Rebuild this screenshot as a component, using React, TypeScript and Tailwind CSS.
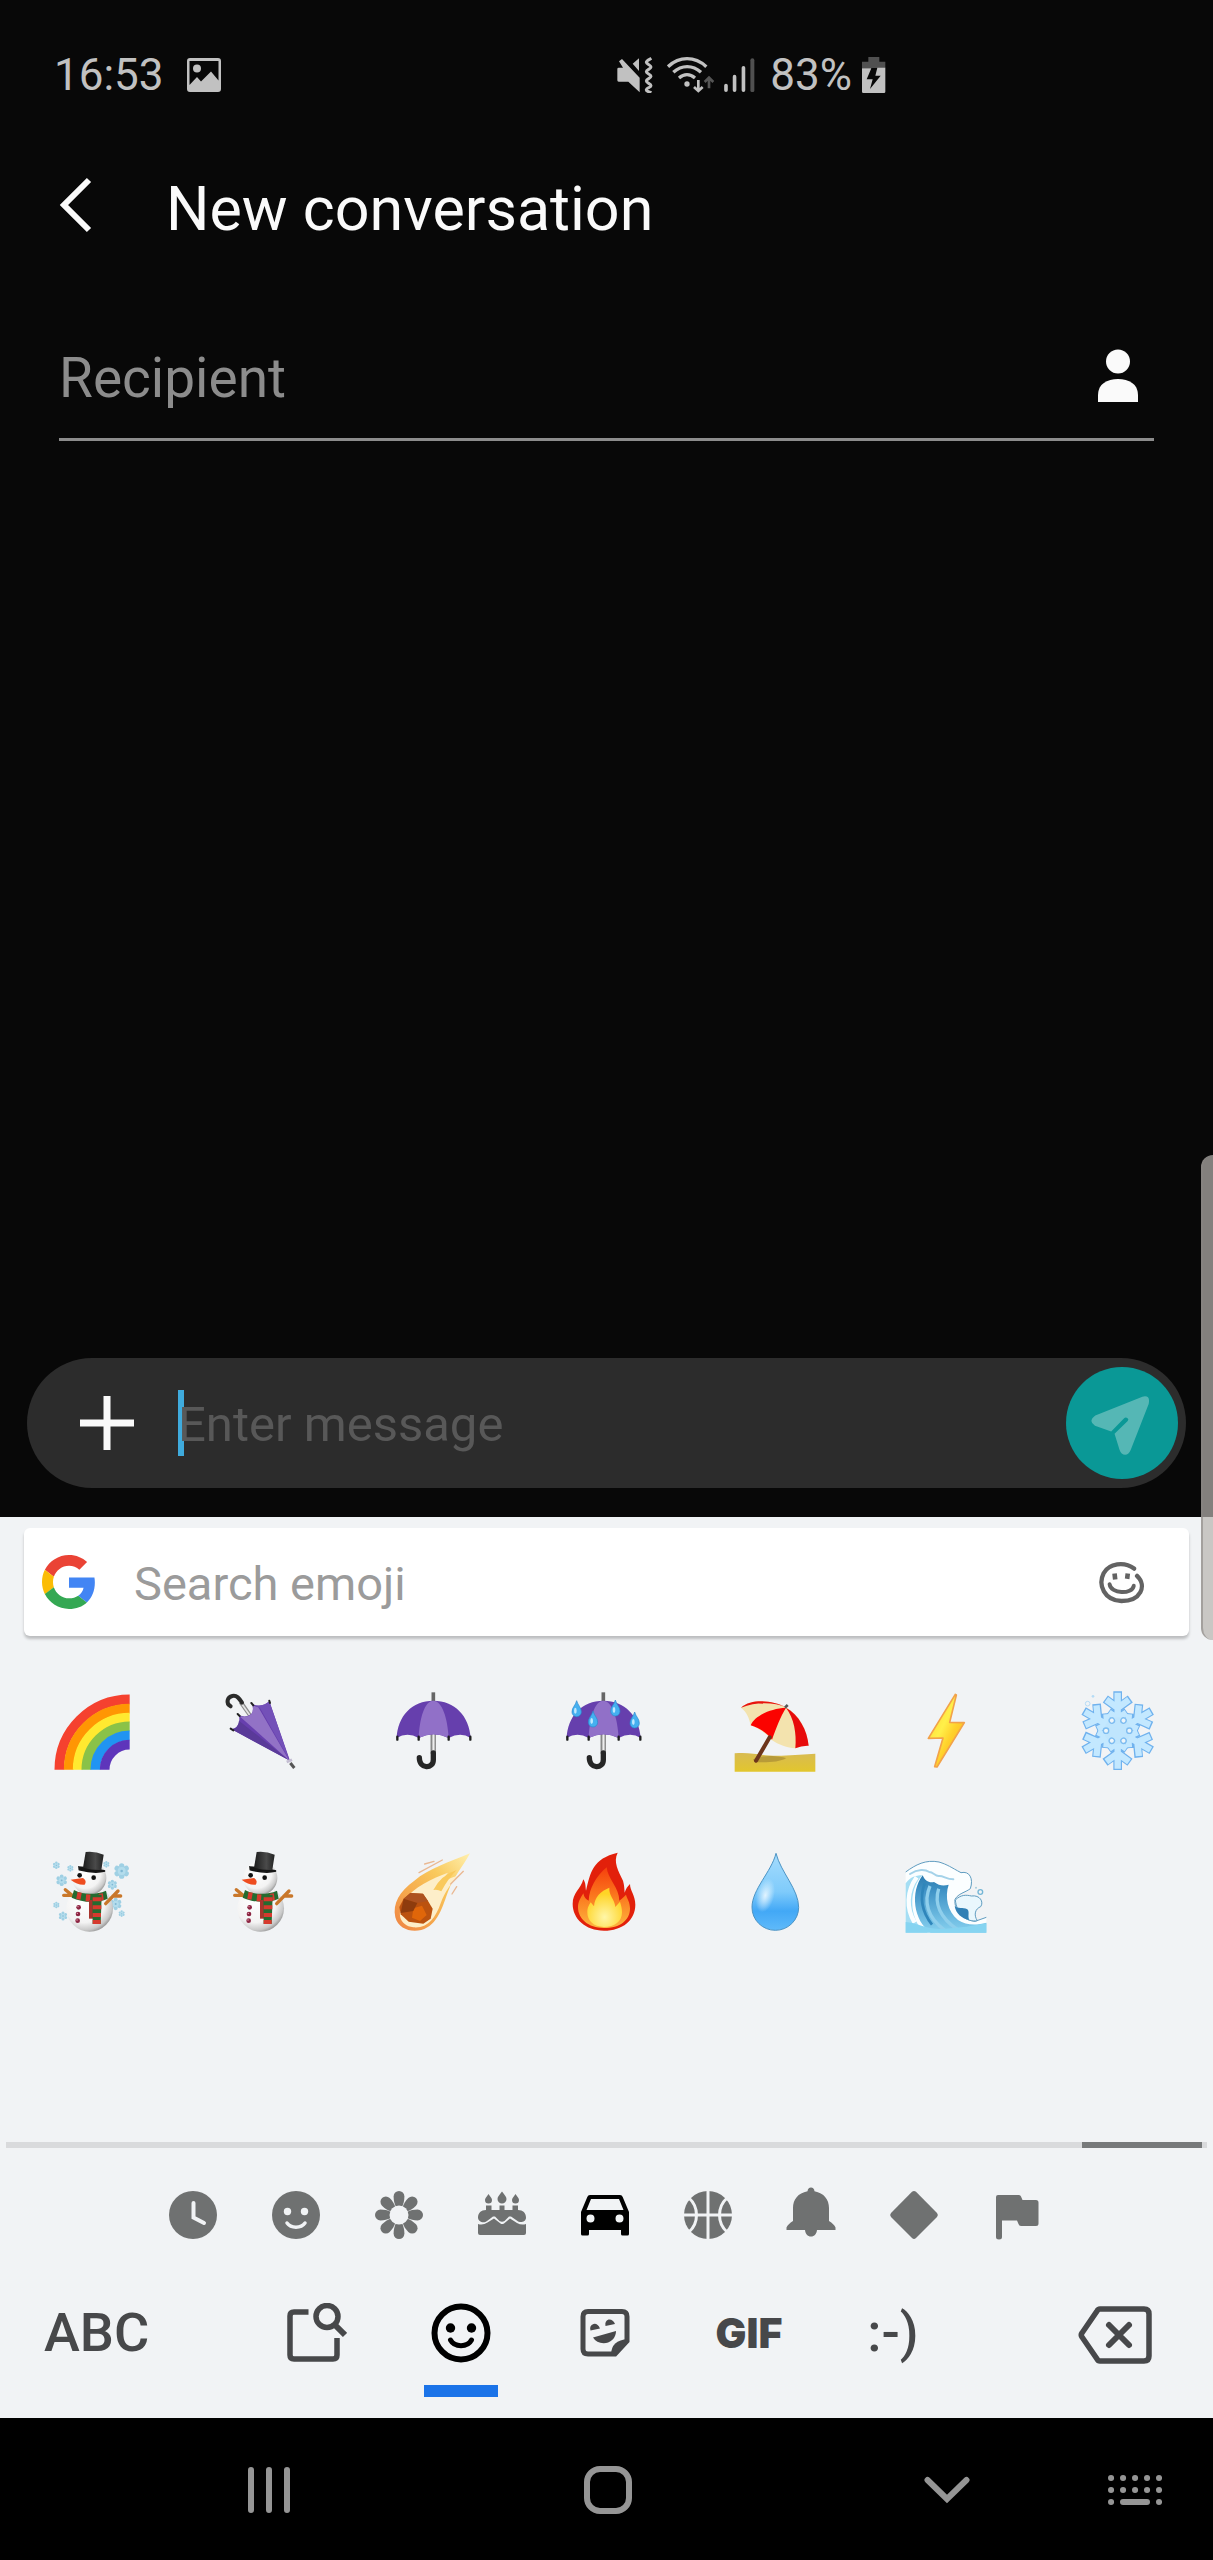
import { useState } from "react";
import type { ReactNode } from "react";

type IconProps = { box: string; className: string; children: ReactNode };

function Icon({ box, className, children }: IconProps) {
	return (
		<svg viewBox={box} className={className} fill="none" aria-hidden="true">
			{children}
		</svg>
	);
}

/* ---------- status bar ---------- */

function StatusBar() {
	return (
		<header className="flex h-[150px] items-center pl-[54px] pr-[327px] text-[44px] leading-none text-[#c1c1c1]">
			<time>16:53</time>
			<Icon box="0 0 34 34" className="ml-[23px] h-[34px] w-[34px]">
				<path
					fillRule="evenodd"
					fill="currentColor"
					d="M3 0H31a3 3 0 0 1 3 3V31a3 3 0 0 1-3 3H3a3 3 0 0 1-3-3V3a3 3 0 0 1 3-3zM2.500 3V27L10 19l4 4.500L24 13.500l7.500 9V3z"
				/>
				<circle cx="10" cy="10.500" r="4" fill="currentColor" />
			</Icon>
			<Icon box="50 44 108 108" className="ml-auto h-9 w-9">
				<path
					fill="currentColor"
					d="M51 80q0-4 4-4h13L56 57l9-7 53 56v44L84 118H55q-4 0-4-4zM97 64l19-16v38z"
				/>
				<path
					stroke="currentColor"
					strokeWidth="9"
					d="M153 48c-6 4-15 7-15 12s14 8 14 14-14 8-14 14 14 8 14 14-14 8-14 14 14 8 14 14-13 6-14 12 9 6 15 9"
				/>
			</Icon>
			<Icon box="200 44 144 108" className="ml-[14px] h-9 w-12">
				<g stroke="currentColor" strokeWidth="10">
					<path d="M203 73c34-32 80-32 115 0M219 90c25-23 58-23 83 0M236 107c15-13 33-13 48 0" />
					<path d="M294 113v32M281 134l13 12 13-12" strokeWidth="8" />
				</g>
				<circle cx="260" cy="125" r="8" fill="currentColor" />
				<path d="M326 138v-32M313 119l13-13 13 13" stroke="#555" strokeWidth="8" />
			</Icon>
			<Icon box="370 50 94 102" className="ml-[9px] h-[34px] w-[31px]">
				<path
					d="M376 133v14M402 106v41M429 79v68"
					stroke="currentColor"
					strokeWidth="11"
					strokeLinecap="round"
				/>
				<path d="M456 56v91" stroke="#505050" strokeWidth="12" strokeLinecap="round" />
			</Icon>
			<span className="ml-[15px]">83%</span>
			<Icon box="788 44 72 108" className="ml-[10px] h-9 w-6">
				<path d="M807 44h33v14h18v19h-70V58h19z" fill="#505050" />
				<path
					fillRule="evenodd"
					fill="currentColor"
					d="M788 78h28l-14 33h18l-8 29 32-40h-16l6-24h24v72q0 4-4 4h-62q-4 0-4-4z"
				/>
			</Icon>
		</header>
	);
}

/* ---------- emoji ---------- */

const RAINBOW = [
	{ r: 211, color: "#f5412f" },
	{ r: 183, color: "#ff9603" },
	{ r: 156, color: "#ffe930" },
	{ r: 130, color: "#8ac248" },
	{ r: 103, color: "#2094f2" },
	{ r: 75, color: "#5e35bb" },
];

function Rainbow() {
	return (
		<Icon box="151 87 252 252" className="h-[84px] w-[84px]">
			{RAINBOW.map(({ r, color }) => (
				<path
					key={color}
					d={`M${390 - r} 329A${r} ${r} 0 0 1 390 ${329 - r}`}
					stroke={color}
					strokeWidth="29"
				/>
			))}
		</Icon>
	);
}

function ClosedUmbrella() {
	return (
		<Icon box="663 87 252 252" className="h-[84px] w-[84px]">
			<path d="M722 126l28 40" stroke="#8a8a8a" strokeWidth="12" />
			<path d="M724 130l25 35" stroke="#e4e4e4" strokeWidth="5" />
			<path
				d="M692 139c-16-9-10-28 5-31 14-3 21 8 29 20"
				stroke="#2b2b2b"
				strokeWidth="12"
				strokeLinecap="round"
			/>
			<path
				d="M695 208q28-5 22-42 23 8 37-4 8-10 3-30 28 12 51-8l62 178z"
				fill="#673fae"
			/>
			<path d="M717 167q23 8 37-4 8-10 3-27l18 6 93 160z" fill="#9272c6" />
			<path d="M757 133q28 11 51-9l60 176-88-156z" fill="#7350b8" />
			<path d="M695 208q20-4 22-26l150 119z" fill="#5a3a99" />
			<path
				d="M692 206l8 5M713 162l6 6M754 129l6 7M808 122l2 7"
				stroke="#222"
				strokeWidth="6"
				strokeLinecap="round"
			/>
			<path d="M860 306l16-7" stroke="#c4bdd2" strokeWidth="8" />
			<path d="M871 309l12 15" stroke="#555" strokeWidth="9" />
		</Icon>
	);
}

function Umbrella({ rain = false }: { rain?: boolean }) {
	return (
		<Icon box="1176 87 252 252" className="h-[84px] w-[84px]">
			<defs>
				<linearGradient id="shaft" x1="0" y1="0" x2="1" y2="0">
					<stop offset="0" stopColor="#555" />
					<stop offset=".5" stopColor="#f4f4f4" />
					<stop offset="1" stopColor="#777" />
				</linearGradient>
			</defs>
			<path d="M1300 97v30" stroke="#666" strokeWidth="11" />
			<path d="M1292 215h16v66h-16z" fill="url(#shaft)" />
			<path
				d="M1300 279v20c0 29-42 29-42-6"
				stroke="#262626"
				strokeWidth="16"
				strokeLinecap="round"
			/>
			<path
				d="M1190 234c3-66 46-112 110-112s108 46 112 112q-30-20-66 0-45-22-90 0-34-20-66 0z"
				fill="#663fad"
			/>
			<path d="M1256 234c3-60 18-112 44-112s43 52 46 112q-45-22-90 0z" fill="#9170c8" />
			<path
				d="M1192 230v9M1256 230v9M1346 230v9M1411 230v9"
				stroke="#1e1e1e"
				strokeWidth="7"
				strokeLinecap="round"
			/>
			{rain && (
				<g fill="#45b0f0" stroke="#2b86cd" strokeWidth="2">
					{[
						[1220, 148],
						[1336, 146],
						[1269, 179],
						[1394, 182],
					].map(([x, y]) => (
						<g key={x} transform={`translate(${x} ${y})`}>
							<path d="M0-26c4 15 14 20 14 34a14 14 0 0 1-28 0c0-14 10-19 14-34z" />
							<ellipse cx="-4" cy="4" rx="4" ry="9" fill="#bfe8ff" stroke="none" />
						</g>
					))}
				</g>
			)}
		</Icon>
	);
}

function BeachUmbrella() {
	return (
		<Icon box="100 57 252 252" className="h-[84px] w-[84px]">
			<defs>
				<linearGradient id="sand" x1="0" y1="0" x2="0" y2="1">
					<stop offset="0" stopColor="#d8bb52" />
					<stop offset="1" stopColor="#e2c62d" />
				</linearGradient>
			</defs>
			<path d="M105 250c50-6 90 10 140 7 40-2 70-4 102-6v54H105z" fill="url(#sand)" />
			<path d="M160 268c30-16 80-10 100-4-20 14-70 14-95 12z" fill="#a88c33" opacity=".7" />
			<path
				d="M124 113c32-28 95-22 134-1 42 23 64 68 69 115-14-1-26 3-40 8-24-3-50-10-72-26-12-18-36-32-62-43-4-22-12-40-29-53z"
				fill="#f3e3ae"
			/>
			<path d="M124 113c32-28 95-22 134-1-32-14-84-18-134 1z" fill="#e81410" />
			<path d="M153 166c10-26 54-50 106-53-16 26-30 62-42 96-14-20-38-35-64-43z" fill="#fb0300" />
			<path d="M259 113c39 21 64 68 68 114q-21-1-40 8c4-46-4-90-28-122z" fill="#e70b0b" />
			<path d="M256 113l8-8" stroke="#555" strokeWidth="8" />
			<path d="M210 202l-41 70" stroke="#6d351b" strokeWidth="12" strokeLinecap="round" />
		</Icon>
	);
}

function Bolt() {
	return (
		<Icon box="612 57 252 252" className="h-[84px] w-[84px]">
			<defs>
				<linearGradient id="bolt" x1="0" y1="0" x2="1" y2="1">
					<stop offset="0" stopColor="#ffc928" />
					<stop offset=".42" stopColor="#fff04a" />
					<stop offset=".6" stopColor="#ffd12b" />
					<stop offset="1" stopColor="#f9a51a" />
				</linearGradient>
			</defs>
			<path
				d="M766 73L685 205l44-1-25 86 7 1 82-133-44-1 20-82z"
				fill="url(#bolt)"
				stroke="#f2a24a"
				strokeWidth="5"
				strokeLinejoin="round"
			/>
		</Icon>
	);
}

const TURNS = [0, 60, 120, 180, 240, 300];

function Snowflake() {
	return (
		<Icon box="1124 57 252 252" className="h-[84px] w-[84px]">
			{[
				{ color: "#70b2ee", width: 26 },
				{ color: "#c3e8ff", width: 19 },
			].map(({ color, width }) => (
				<g key={color} stroke={color} strokeWidth={width} strokeLinejoin="round">
					{TURNS.map((a) => (
						<path
							key={a}
							transform={`rotate(${a} 1252 182)`}
							d={
								width === 26
									? "M1252 182V64M1215 87l37 27 38-27M1224 126l28 20 28-20"
									: "M1252 182V68M1218 89l34 25 34-25M1226 128l26 18 26-18"
							}
						/>
					))}
					<circle cx="1252" cy="182" r="34" />
				</g>
			))}
			<circle cx="1252" cy="182" r="40" fill="#bfe5fd" />
			{TURNS.map((a) => (
				<circle
					key={a}
					cx="1287"
					cy="182"
					r="8"
					transform={`rotate(${a} 1252 182)`}
					fill="#eef5fa"
					stroke="#7dbcf0"
					strokeWidth="4"
				/>
			))}
			<circle cx="1162" cy="101" r="7" stroke="#b6dcf6" strokeWidth="3" />
			<circle cx="1178" cy="79" r="4" fill="#b6dcf6" />
		</Icon>
	);
}

const FLAKES = [
	{ x: 170, y: 616, r: 9 },
	{ x: 212, y: 625, r: 8 },
	{ x: 186, y: 661, r: 14 },
	{ x: 320, y: 613, r: 8 },
	{ x: 366, y: 633, r: 19 },
	{ x: 338, y: 674, r: 12 },
	{ x: 348, y: 732, r: 15 },
	{ x: 170, y: 735, r: 8 },
	{ x: 190, y: 768, r: 11 },
	{ x: 366, y: 761, r: 8 },
];

function Snowman({ snow = false }: { snow?: boolean }) {
	return (
		<Icon box="151 570 252 252" className="h-[84px] w-[84px]">
			<defs>
				<radialGradient id="snowball" cx=".38" cy=".35" r=".7">
					<stop offset="0" stopColor="#fff" />
					<stop offset=".65" stopColor="#f3f3f3" />
					<stop offset=".88" stopColor="#c9c9c9" />
					<stop offset="1" stopColor="#909090" />
				</radialGradient>
				<linearGradient id="hat" x1="0" y1="0" x2="1" y2="0">
					<stop offset="0" stopColor="#1c1c1c" />
					<stop offset=".6" stopColor="#4a4a4a" />
					<stop offset="1" stopColor="#222" />
				</linearGradient>
			</defs>
			{snow &&
				FLAKES.map(({ x, y, r }) => (
					<g key={`${x}-${y}`} transform={`translate(${x} ${y})`} fill="#9fd0e4">
						{TURNS.map((a) => (
							<circle key={a} cx={r * 0.82} cy="0" r={r * 0.42} transform={`rotate(${a + 30})`} />
						))}
						<circle r={r * 0.62} fill="#b3dcec" />
						<circle r={r * 0.2} fill="#7fb8d4" />
					</g>
				))}
			<circle cx="270" cy="745" r="70" fill="url(#snowball)" />
			<circle cx="269" cy="654" r="51" fill="url(#snowball)" />
			<g stroke="#c9772a" strokeWidth="10" strokeLinecap="round">
				<path d="M197 689l24 20M192 706h22" />
				<path d="M318 731l37-38M340 708h23" />
			</g>
			<path d="M238 621c24 2 54 6 78 12-24 6-54 2-77-4z" fill="#161616" stroke="#161616" strokeWidth="5" />
			<path d="M258 576q28-3 54 8l-7 46q-28 1-55-7z" fill="url(#hat)" />
			<circle cx="240" cy="646" r="7" fill="#121212" />
			<circle cx="282" cy="653" r="7" fill="#121212" />
			<path d="M213 659l37-5q13 8 5 20-21 2-42-15z" fill="#ee4d20" />
			<path d="M223 690c28 15 66 15 96 2l5 24c-32 14-76 12-108-3z" fill="#246b30" />
			<path
				d="M240 697l-4 21M266 703l-2 21M303 701l3 20"
				stroke="#d63a2e"
				strokeWidth="13"
			/>
			<path d="M268 720h12v56h-12z" fill="#a7342c" />
			<path d="M278 704h28l-3 88h-24z" fill="#246b30" />
			<path d="M279 718h27M279 742h26M279 765h25M279 786h24" stroke="#d63a2e" strokeWidth="12" />
			<g fill="#8c2441">
				<circle cx="237" cy="742" r="7" />
				<circle cx="235" cy="762" r="7" />
				<circle cx="234" cy="782" r="7" />
			</g>
			<g fill="#e8a9bb">
				<circle cx="235" cy="740" r="2" />
				<circle cx="233" cy="760" r="2" />
				<circle cx="232" cy="780" r="2" />
			</g>
		</Icon>
	);
}

function Comet() {
	return (
		<Icon box="1176 570 252 252" className="h-[84px] w-[84px]">
			<defs>
				<linearGradient id="tail" x1="1" y1="0" x2="0" y2="1">
					<stop offset="0" stopColor="#fff0b0" />
					<stop offset=".35" stopColor="#f9c95c" />
					<stop offset=".7" stopColor="#f5a64c" />
					<stop offset="1" stopColor="#ee8142" />
				</linearGradient>
			</defs>
			<path
				d="M1410 580c-62 26-124 46-167 82-44 32-66 68-57 110 9 34 45 46 78 38 50-14 64-72 82-120 14-36 42-70 64-110z"
				fill="url(#tail)"
			/>
			<path
				d="M1344 638c-46 16-104 44-130 82-26 40-16 76 26 82 42 4 66-26 82-72 12-32 30-62 56-82-24 0-44 16-60 32 6-16 14-28 26-42z"
				fill="#fdeec9"
			/>
			<path d="M1300 690q22-44 70-60-26 26-46 64-10-6-24-4z" fill="#f9c95c" />
			<path d="M1211 716l20-17 38 2 15 22 14 23-6 30-22 15-44-6-24-22-4-22z" fill="#bb520f" />
			<path d="M1231 699l38 2 15 22-32 6-41-13z" fill="#ad5220" />
			<path d="M1240 745l26-8 14 28-20 18-24-10z" fill="#e0660a" />
			<path d="M1211 716l41 13-12 24-38 6z" fill="#8e3c0d" />
			<path
				d="M1257 638l70-38M1274 612l28-8M1356 702l14-22M1352 672l38-38"
				stroke="#eab892"
				strokeWidth="4"
				strokeLinecap="round"
			/>
		</Icon>
	);
}

function Fire() {
	return (
		<Icon box="-126 570 252 252" className="h-[84px] w-[84px]">
			<defs>
				<linearGradient id="flame" x1="0" y1="0" x2="0" y2="1">
					<stop offset="0" stopColor="#f5400d" />
					<stop offset=".5" stopColor="#fb7b1f" />
					<stop offset="1" stopColor="#fdb640" />
				</linearGradient>
				<radialGradient id="core" cx=".5" cy=".75" r=".6">
					<stop offset="0" stopColor="#fff6a8" />
					<stop offset="1" stopColor="#ffd426" />
				</radialGradient>
			</defs>
			<path
				d="M41 578c-14 28 2 54 16 84 4 14 4 24 5 36 4-12 8-18 16-26 0 20 16 34 16 62 0 46-38 78-94 78s-94-36-94-80c0-34 24-44 32-74 8 12 6 22 8 34 14-56 20-96 95-114z"
				fill="#e2200b"
			/>
			<path
				d="M8 622c2 32 38 62 38 100 8-6 14-12 20-18 4 14 12 22 12 42 0 34-30 58-78 58s-78-28-78-62c0-18 8-28 16-42 2 12 8 18 16 22 2-38 22-72 54-100z"
				fill="url(#flame)"
			/>
			<path
				d="M16 683c-2 24 16 34 18 58l14-16c4 14 6 20 6 32 0 28-22 44-54 44s-50-20-50-44c0-14 4-20 10-30l10 12c2-28 20-46 46-56z"
				fill="url(#core)"
			/>
		</Icon>
	);
}

function Droplet() {
	return (
		<Icon box="100 540 252 252" className="h-[84px] w-[84px]">
			<defs>
				<linearGradient id="water" x1="0" y1="0" x2="0" y2="1">
					<stop offset="0" stopColor="#a5dcfd" />
					<stop offset=".5" stopColor="#7fcbfb" />
					<stop offset=".75" stopColor="#42a8f6" />
					<stop offset="1" stopColor="#5fbafa" />
				</linearGradient>
				<radialGradient id="shine">
					<stop offset="0" stopColor="#e2f4ff" />
					<stop offset="1" stopColor="#e2f4ff" stopOpacity="0" />
				</radialGradient>
			</defs>
			<path
				d="M229 550c14 56 68 108 68 162a70 69 0 0 1-140 0c0-54 58-106 72-162z"
				fill="url(#water)"
				stroke="#4b93c4"
				strokeWidth="3"
			/>
			<ellipse cx="197" cy="676" rx="27" ry="52" fill="url(#shine)" transform="rotate(14 197 676)" />
		</Icon>
	);
}

function Wave() {
	return (
		<Icon box="612 540 252 252" className="h-[84px] w-[84px]">
			<defs>
				<linearGradient id="sea" x1="0" y1="0" x2="0" y2="1">
					<stop offset="0" stopColor="#2b7cb0" />
					<stop offset=".3" stopColor="#4295c8" />
					<stop offset=".65" stopColor="#65b4dc" />
					<stop offset="1" stopColor="#86d0ef" />
				</linearGradient>
			</defs>
			<path
				d="M617 606c30-22 60-38 100-30 26 8 36 16 66 32 26-6 38 18 28 48-16 12-36 14-46 32-4 34 26 62 60 66l34-12v46H617z"
				fill="#fbfeff"
			/>
			<path
				d="M617 606c30-22 60-38 100-30 26 8 36 16 66 32 26-6 38 18 28 48-16 12-36 14-46 32-4 34 26 62 60 66l34-12"
				stroke="#5f9cc0"
				strokeWidth="3"
			/>
			<path
				d="M766 690c16-16 32-16 48-12 26-4 38 18 28 32-16 6-22 24-10 42-34 6-62-22-66-62z"
				fill="#e9f7fd"
				stroke="#5f9cc0"
				strokeWidth="3"
			/>
			<path d="M764 709c10 8 24 2 38 9 8 8 0 20 6 32-24-4-40-20-44-41z" fill="#3180b5" />
			<path d="M617 640c14-18 28-24 50-24-34 36-40 96-14 146l30 26h-66z" fill="#a5def4" />
			<path d="M650 622c-30 42-32 92-6 136" stroke="#fbfeff" strokeWidth="13" />
			<path
				d="M668 616c6 16 20 24 34 20 16 12 30 12 44 8-12 36-4 80 28 106 24 16 56 16 85 8v30H692c-52-36-62-122-24-172z"
				fill="url(#sea)"
			/>
			<path d="M690 648c-20 46-8 96 44 132M716 656c-14 44 4 88 56 122" stroke="#8fcfec" strokeWidth="10" />
			<path d="M674 640c-16 44-6 88 22 124" stroke="#2f86bb" strokeWidth="8" />
			<path
				d="M630 612c24-16 46-14 58-6 12 0 16 12 28 12 14-2 22 10 44 10"
				stroke="#a4d2e9"
				strokeWidth="6"
				strokeLinecap="round"
			/>
			<path d="M617 756c34 2 70 26 120 20 44-2 80-8 122-16v28H617z" fill="#86d4f1" />
			<circle cx="841" cy="666" r="7" stroke="#74b6d6" strokeWidth="4" />
			<circle cx="828" cy="653" r="3" fill="#a9cede" />
		</Icon>
	);
}

const EMOJI = [
	{ name: "rainbow", art: <Rainbow /> },
	{ name: "closed umbrella", art: <ClosedUmbrella /> },
	{ name: "umbrella", art: <Umbrella /> },
	{ name: "umbrella with rain drops", art: <Umbrella rain /> },
	{ name: "umbrella on ground", art: <BeachUmbrella /> },
	{ name: "high voltage", art: <Bolt /> },
	{ name: "snowflake", art: <Snowflake /> },
	{ name: "snowman", art: <Snowman snow /> },
	{ name: "snowman without snow", art: <Snowman /> },
	{ name: "comet", art: <Comet /> },
	{ name: "fire", art: <Fire /> },
	{ name: "droplet", art: <Droplet /> },
	{ name: "water wave", art: <Wave /> },
];

/* ---------- emoji categories ---------- */

const PAPER = "#f1f3f5";

const CATEGORIES = [
	{
		name: "Recent",
		art: (
			<>
				<circle cx="24" cy="24" r="24" fill="currentColor" />
				<path d="M24.500 12v14.500L35 32" stroke={PAPER} strokeWidth="4" strokeLinecap="round" />
			</>
		),
	},
	{
		name: "Smileys",
		art: (
			<>
				<circle cx="24" cy="24" r="24" fill="currentColor" />
				<circle cx="15.500" cy="20.500" r="3.700" fill={PAPER} />
				<circle cx="32.500" cy="20.500" r="3.700" fill={PAPER} />
				<path d="M15 32c4 5.500 14 5.500 18 0" stroke={PAPER} strokeWidth="3.500" strokeLinecap="round" />
			</>
		),
	},
	{
		name: "Nature",
		art: (
			<>
				{[0, 45, 90, 135, 180, 225, 270, 315].map((a) => (
					<path
						key={a}
						transform={`rotate(${a} 24 24)`}
						d="M24 0a5.400 5.400 0 0 1 5.400 5.400c0 4-.8 7-2.400 10.600h-6c-1.600-3.600-2.400-6.600-2.400-10.600A5.400 5.400 0 0 1 24 0z"
						fill="currentColor"
					/>
				))}
				<circle cx="24" cy="24" r="9.500" fill={PAPER} />
			</>
		),
	},
	{
		name: "Food",
		art: (
			<path
				fill="currentColor"
				d="M10.500 3c2 3 3.500 4 3.500 6a3.500 3.500 0 0 1-7 0c0-2 1.500-3 3.500-6zM24 .5c2.500 3.500 4.500 5 4.500 7.500a4.500 4.500 0 0 1-9 0c0-2.500 2-4 4.500-7.500zM37.500 3c2 3 3.500 4 3.500 6a3.500 3.500 0 0 1-7 0c0-2 1.500-3 3.500-6zM8 14.500h5.500V19h8v-4.500h5V19h8v-4.500H40V19c5 0 8 3 8 7.500 0 5-6.500 5.500-8.500 3.500L33 25.500h-2L26.500 30q-2.500 1.500-5 0L17 25.500h-2L9 30c-3 2.500-9 1-9-3.500C0 22 3 19 8 19zM0 33q5 1.500 9.500-1.500l6.500-4 6.500 5q1.500 1 3.500 0l6-5 7 4.500Q43.500 34.500 48 33v9a2 2 0 0 1-2 2H2a2 2 0 0 1-2-2z"
			/>
		),
	},
	{
		name: "Travel",
		art: (
			<path
				fillRule="evenodd"
				fill="currentColor"
				d="M9 4h30q2 0 2.700 2L48 21v22q0 1.500-1.500 1.500h-5Q40 44.500 40 43v-4H8v4q0 1.500-1.500 1.500h-5Q0 44.500 0 43V21L6.300 6Q7 4 9 4zM10 8L5.500 19h37L38 8zM9.500 23.500a4 4 0 1 0 0 8 4 4 0 0 0 0-8zM38.500 23.500a4 4 0 1 0 0 8 4 4 0 0 0 0-8z"
			/>
		),
	},
	{
		name: "Activities",
		art: (
			<>
				<circle cx="24" cy="24" r="24" fill="currentColor" />
				<path
					d="M24 0v48M0 24h48M5 7c10 9 10 25 0 34M43 7c-10 9-10 25 0 34"
					stroke={PAPER}
					strokeWidth="3"
				/>
			</>
		),
	},
	{
		name: "Objects",
		art: (
			<path
				fill="currentColor"
				d="M24-3.500q3 0 3.500 3.700C37 2 42 8.500 42 17v13q5 3 6.500 6.500V39H30c-.5 4-2.500 6.500-6 6.500S18.500 43 18 39H-.5v-2.500Q1 33 6 30V17C6 8.500 11 2 20.500.2q.5-3.700 3.500-3.700z"
			/>
		),
	},
	{
		name: "Symbols",
		art: (
			<path
				fill="currentColor"
				d="M22 .8q2-1.800 4 0L47 22q1.800 2 0 4L26 47q-2 1.800-4 0L1 26q-1.800-2 0-4z"
			/>
		),
	},
	{
		name: "Flags",
		art: (
			<path
				fill="currentColor"
				d="M5 4h21q1.500 0 2 1.500L29.500 9H43q2.500 0 2.500 2.500v21Q45.500 35 43 35H28q-2 0-2.500-2L24 29.500H9V46q0 2.500-3 2.500T3 46V6q0-2 2-2z"
			/>
		),
	},
];

/* ---------- keyboard modes ---------- */

const MODES = [
	{
		name: "Search",
		art: (
			<Icon box="0 0 60 60" className="h-[60px] w-[60px]">
				<path d="M21.500 9H7Q3 9 3 13V52Q3 56 7 56H46Q50 56 50 52V35" stroke="currentColor" strokeWidth="5.500" />
				<circle cx="40" cy="13.500" r="11" stroke="currentColor" strokeWidth="5.500" />
				<path d="M47 21l11 11" stroke="currentColor" strokeWidth="6" />
			</Icon>
		),
	},
	{
		name: "Emoji",
		art: (
			<Icon box="0 0 60 60" className="h-[60px] w-[60px]">
				<circle cx="30" cy="30" r="26.500" stroke="currentColor" strokeWidth="6" />
				<circle cx="19.500" cy="25" r="4.700" fill="currentColor" />
				<circle cx="40.500" cy="25" r="4.700" fill="currentColor" />
				<path d="M19.500 37c4 7.500 17 7.500 21 0" stroke="currentColor" strokeWidth="5" strokeLinecap="round" />
			</Icon>
		),
	},
	{
		name: "Stickers",
		art: (
			<Icon box="0 0 50 50" className="h-[50px] w-[50px]">
				<path d="M8 3.500H42q5 0 5 5V33L35 46H8q-5 0-5-5V8.500q0-5 5-5z" stroke="currentColor" strokeWidth="5" />
				<path d="M31 47q0-15 17-16v3L35 48z" fill="currentColor" />
				<path d="M10.500 22.500q-1.500-5 3-6.500 4-1 6.500 4.500zM25.500 18q-1-5 3-6.500 4.500-.5 6.500 4.500zM13 29.500l23-6.500c0 6-4 11-10 12q-9 1-13-5.500z" fill="currentColor" />
			</Icon>
		),
	},
	{
		name: "GIF",
		art: <span className="font-[Inter] text-[41px] font-black leading-none">GIF</span>,
	},
	{
		name: "Emoticons",
		art: <span className="text-[54px] font-medium leading-none">:-)</span>,
	},
];

function Keyboard() {
	const [category, setCategory] = useState("Travel");
	const [mode, setMode] = useState("Emoji");

	return (
		<section className="flex flex-col bg-[#f1f3f5] pb-[21px] pt-[11px]" aria-label="Keyboard">
			<label className="mx-6 flex h-[108px] items-center rounded-md bg-white pl-[18px] pr-[44px] shadow-[0_3px_3px_rgba(0,0,0,0.22)]">
				<Icon box="0 0 48 48" className="h-[54px] w-[54px] shrink-0">
					<path fill="#EA4335" d="M24 9.500c3.540 0 6.710 1.220 9.210 3.600l6.850-6.850C35.900 2.380 30.470 0 24 0 14.620 0 6.510 5.380 2.560 13.220l7.980 6.190C12.430 13.720 17.740 9.500 24 9.500z" />
					<path fill="#4285F4" d="M46.980 24.550c0-1.570-.15-3.090-.38-4.550H24v9.020h12.940c-.58 2.960-2.260 5.480-4.780 7.180l7.730 6c4.510-4.180 7.090-10.360 7.090-17.650z" />
					<path fill="#FBBC05" d="M10.530 28.590c-.48-1.450-.76-2.990-.76-4.590s.27-3.140.76-4.590l-7.980-6.190C.92 16.460 0 20.120 0 24c0 3.880.92 7.540 2.560 10.780l7.970-6.190z" />
					<path fill="#34A853" d="M24 48c6.480 0 11.930-2.130 15.890-5.810l-7.730-6c-2.150 1.450-4.920 2.300-8.160 2.300-6.260 0-11.570-4.220-13.470-9.910l-7.980 6.190C6.510 42.620 14.620 48 24 48z" />
				</Icon>
				<input
					type="text"
					aria-label="Search emoji"
					placeholder="Search emoji"
					className="ml-[38px] min-w-0 flex-1 bg-transparent pt-1 text-[47px] leading-[60px] text-gray-800 outline-none placeholder:text-[#9b9b9b]"
				/>
				<Icon box="294 1262 142 130" className="h-[43px] w-[47px] shrink-0">
					<g stroke="#636363" strokeWidth="13" strokeLinecap="round">
						<path d="M403 1285c-30-22-75-16-92 14-18 36 2 82 54 84 58 0 78-46 47-76" />
						<path d="M329 1332c4 30 68 32 73 5" strokeWidth="12" />
					</g>
					<path d="M344 1300l2 18M384 1300l-2 16" stroke="#636363" strokeWidth="14" />
				</Icon>
			</label>

			<div className="mt-[53px] grid h-[453px] auto-rows-[84px] grid-cols-7 gap-y-[77px] pl-[7px] pr-[11px]">
				{EMOJI.map(({ name, art }) => (
					<button key={name} type="button" aria-label={name} className="flex justify-center">
						{art}
					</button>
				))}
			</div>

			<div className="mx-[6px] flex h-[6px] justify-end bg-[#d9dadc] pr-[5px]">
				<div className="w-[10%] bg-[#77797a]" />
			</div>

			<div className="mt-[31px] flex justify-center pr-[3px]">
				{CATEGORIES.map(({ name, art }) => (
					<button
						key={name}
						type="button"
						aria-label={name}
						aria-pressed={category === name}
						onClick={() => setCategory(name)}
						className={
							category === name
								? "flex h-[72px] w-[103px] items-center justify-center text-black"
								: "flex h-[72px] w-[103px] items-center justify-center text-[#6f7171]"
						}
					>
						<Icon box="0 0 48 48" className="h-12 w-12 overflow-visible">
							{art}
						</Icon>
					</button>
				))}
			</div>

			<div className="mt-[30px] grid grid-cols-[1fr_auto_1fr] pr-[3px] text-[#47484a]">
				<button
					type="button"
					className="flex h-[104px] items-center pl-11 text-[54px] font-medium leading-none"
				>
					ABC
				</button>
				<div className="flex">
					{MODES.map(({ name, art }) => (
						<button
							key={name}
							type="button"
							aria-label={name}
							aria-pressed={mode === name}
							onClick={() => setMode(name)}
							className={
								mode === name
									? "flex w-36 flex-col items-center text-black"
									: "flex w-36 flex-col items-center"
							}
						>
							<span className="flex h-[104px] items-center">{art}</span>
							{mode === name && <span className="h-3 w-[74px] bg-[#1b73e8]" />}
						</button>
					))}
				</div>
				<button
					type="button"
					aria-label="Backspace"
					className="flex h-[108px] items-center justify-end pr-[58px]"
				>
					<Icon box="0 0 74 58" className="h-[58px] w-[74px]">
						<path
							d="M22 3H66q5 0 5 5V50q0 5-5 5H22q-2 0-3-2L4 31q-1.500-2 0-4L19 5q1-2 3-2z"
							stroke="currentColor"
							strokeWidth="5.500"
						/>
						<path d="M31 19l20 20M51 19L31 39" stroke="currentColor" strokeWidth="6" strokeLinecap="round" />
					</Icon>
				</button>
			</div>
		</section>
	);
}

function NavBar() {
	return (
		<nav className="flex h-[142px] items-center gap-[68px] bg-black pl-[209px] pr-[18px] pt-[2px] text-[#959595]">
			<div className="flex flex-1 justify-between">
				<button type="button" aria-label="Recents" className="flex h-20 w-[120px] items-center justify-center">
					<Icon box="0 0 42 46" className="h-[46px] w-[42px]">
						<path d="M3 3v40M21 3v40M39 3v40" stroke="currentColor" strokeWidth="6" strokeLinecap="round" />
					</Icon>
				</button>
				<button type="button" aria-label="Home" className="flex h-20 w-[120px] items-center justify-center">
					<Icon box="0 0 48 48" className="h-12 w-12">
						<rect x="3" y="3" width="42" height="42" rx="13" stroke="currentColor" strokeWidth="6" />
					</Icon>
				</button>
				<button type="button" aria-label="Hide keyboard" className="flex h-20 w-[120px] items-center justify-center">
					<Icon box="0 0 46 28" className="h-7 w-[46px]">
						<path d="M3.500 4L23 23 42.500 4" stroke="currentColor" strokeWidth="6" strokeLinecap="round" />
					</Icon>
				</button>
			</div>
			<button type="button" aria-label="Switch keyboard" className="flex h-20 w-[120px] items-center justify-center">
				<Icon box="0 0 54 30" className="h-[30px] w-[54px]">
					<path
						d="M3 3h.1M15 3h.1M27 3h.1M39 3h.1M51 3h.1M3 15h.1M15 15h.1M27 15h.1M39 15h.1M51 15h.1M3 27h.1M15 27h24M51 27h.1"
						stroke="currentColor"
						strokeWidth="6"
						strokeLinecap="round"
					/>
				</Icon>
			</button>
		</nav>
	);
}

export default function App() {
	return (
		<div className="relative flex min-h-screen flex-col overflow-hidden bg-[#080808] font-[Roboto,sans-serif]">
			<StatusBar />

			<div className="flex h-[118px] items-center pl-[59px]">
				<button type="button" aria-label="Back" className="pb-2">
					<Icon box="0 0 34 56" className="h-14 w-[34px]">
						<path d="M30 3L5 28l25 25" stroke="#fafafa" strokeWidth="6" />
					</Icon>
				</button>
				<h1 className="ml-[73px] text-[61px] leading-[80px] text-[#fafafa]">New conversation</h1>
			</div>

			<main className="flex flex-1 flex-col">
				<label className="mx-[59px] mt-[45px] flex h-[128px] items-center border-b-[3px] border-[#8c8c8c] pr-[15px]">
					<input
						type="text"
						aria-label="Recipient"
						placeholder="Recipient"
						className="min-w-0 flex-1 bg-transparent pt-1 text-[55px] leading-[72px] text-white outline-none placeholder:text-[#8c8c8c]"
					/>
					<button type="button" aria-label="Pick contact">
						<Icon box="0 0 42 54" className="h-[54px] w-[42px]">
							<circle cx="21" cy="12.500" r="12" fill="#fafafa" />
							<path d="M1 53V46c0-11 9-16 20-16s20 5 20 16v7z" fill="#fafafa" />
						</Icon>
					</button>
				</label>

				<form
					onSubmit={(e) => e.preventDefault()}
					className="mx-[27px] mb-[29px] mt-auto flex h-[130px] items-center rounded-full bg-[#2c2c2c] pl-[53px] pr-2"
				>
					<button type="button" aria-label="Attach">
						<Icon box="0 0 54 54" className="h-[54px] w-[54px]">
							<path d="M27 0v54M0 27h54" stroke="#fafafa" strokeWidth="7" />
						</Icon>
					</button>
					<span className="ml-11 h-[66px] w-[6px] bg-[#3fabdd]" />
					<input
						type="text"
						aria-label="Enter message"
						placeholder="Enter message"
						className="-ml-[6px] min-w-0 flex-1 bg-transparent pt-1 text-[49px] leading-[64px] text-white caret-transparent outline-none placeholder:text-[#585858]"
					/>
					<button
						type="submit"
						aria-label="Send"
						className="flex h-28 w-28 items-center justify-center rounded-full bg-[#0a9896] pr-1 pt-1"
					>
						<Icon box="272 768 176 178" className="h-[59px] w-[59px]">
							<path
								fill="#55b7b5"
								d="M284 827l142-57q25-6 19 22l-54 138q-6 15-17 15-12 0-17-15l-15-48 39-38q5-6 0-9-5-4-10 0l-39 40-49-17q-22-14 1-31z"
							/>
						</Icon>
					</button>
				</form>
			</main>

			<Keyboard />
			<NavBar />

			{/* edge panel handle, floats over chat and keyboard */}
			<div className="absolute bottom-[920px] right-0 h-[485px] w-3 rounded-l-xl border-l-2 border-[#8a8783]/60 bg-[#b8b4af]/70" />
		</div>
	);
}
